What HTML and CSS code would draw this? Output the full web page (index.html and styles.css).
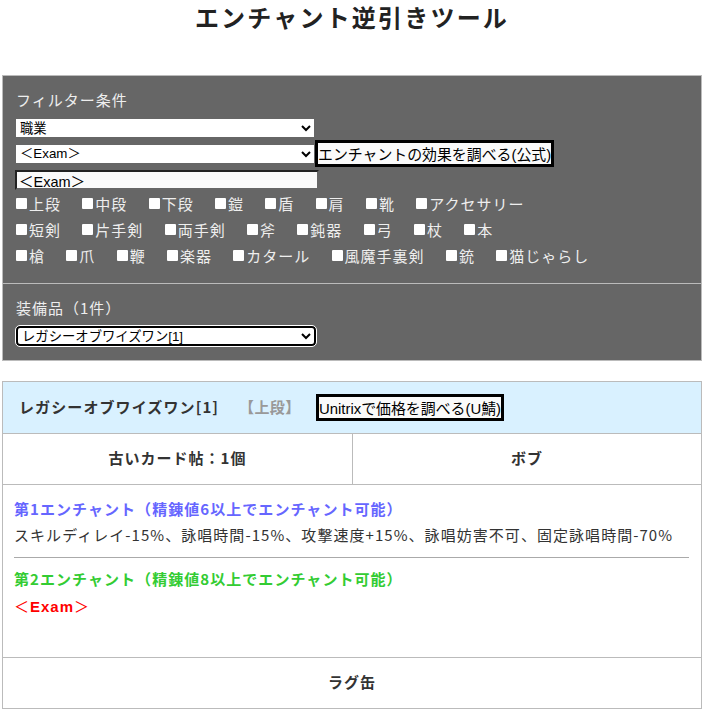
FILE: index.html
```html
<!DOCTYPE html>
<html lang="ja">
<head>
<meta charset="utf-8">
<title>エンチャント逆引きツール</title>
<link rel="stylesheet" href="styles.css">
</head>
<body>
<h1 class="title">エンチャント逆引きツール</h1>
<section class="filter">
  <div class="filter-top">
    <div class="label">フィルター条件</div>
    <div class="row-select row-job"><select class="sel sel-job"><option>職業</option></select></div>
    <div class="row-select row-exam"><select class="sel sel-exam"><option>＜Exam＞</option></select><button class="btn btn-official">エンチャントの効果を調べる(公式)</button></div>
    <input class="text" type="text" value="＜Exam＞">
    <div class="checks">
      <label class="chk"><input type="checkbox">上段</label><label class="chk"><input type="checkbox">中段</label><label class="chk"><input type="checkbox">下段</label><label class="chk"><input type="checkbox">鎧</label><label class="chk"><input type="checkbox">盾</label><label class="chk"><input type="checkbox">肩</label><label class="chk"><input type="checkbox">靴</label><label class="chk"><input type="checkbox">アクセサリー</label>
    </div>
    <div class="checks">
      <label class="chk"><input type="checkbox">短剣</label><label class="chk"><input type="checkbox">片手剣</label><label class="chk"><input type="checkbox">両手剣</label><label class="chk"><input type="checkbox">斧</label><label class="chk"><input type="checkbox">鈍器</label><label class="chk"><input type="checkbox">弓</label><label class="chk"><input type="checkbox">杖</label><label class="chk"><input type="checkbox">本</label>
    </div>
    <div class="checks">
      <label class="chk"><input type="checkbox">槍</label><label class="chk"><input type="checkbox">爪</label><label class="chk"><input type="checkbox">鞭</label><label class="chk"><input type="checkbox">楽器</label><label class="chk"><input type="checkbox">カタール</label><label class="chk"><input type="checkbox">風魔手裏剣</label><label class="chk"><input type="checkbox">銃</label><label class="chk"><input type="checkbox">猫じゃらし</label>
    </div>
  </div>
  <div class="filter-bottom">
    <div class="label">装備品（1件）</div>
    <select class="sel sel-item"><option>レガシーオブワイズワン[1]</option></select>
  </div>
</section>
<section class="card">
  <div class="card-head"><span class="item-name">レガシーオブワイズワン[1]</span><span class="item-slot">【上段】</span><button class="btn btn-price">Unitrixで価格を調べる(U鯖)</button></div>
  <div class="card-cols"><div class="col col-left">古いカード帖：1個</div><div class="col">ボブ</div></div>
  <div class="card-body">
    <div class="ench-title ench-one">第1エンチャント（精錬値6以上でエンチャント可能）</div>
    <div class="ench-text">スキルディレイ-15%、詠唱時間-15%、攻撃速度+15%、詠唱妨害不可、固定詠唱時間-70%</div>
    <hr class="rule">
    <div class="ench-title ench-two">第2エンチャント（精錬値8以上でエンチャント可能）</div>
    <div class="ench-exam"><span class="bracket">＜</span><span class="exam-word">Exam</span><span class="bracket">＞</span></div>
  </div>
  <div class="card-foot">ラグ缶</div>
</section>
</body>
</html>
```
FILE: styles.css
```css
* { box-sizing: border-box; }
html, body { margin: 0; padding: 0; }
body {
  padding: 0 0 0 2px;
  background: #fff;
  color: #333;
  font-family: "Noto Sans CJK JP", sans-serif;
  font-size: 15px;
  letter-spacing: 1px;
  overflow: hidden;
}
.title {
  margin: 0;
  height: 75px;
  text-align: center;
  font-size: 24px;
  line-height: 34px;
  font-weight: 700;
  letter-spacing: 2.2px;
  color: #222;
}
.filter {
  background: #666;
  border: 1px solid #bbb;
  color: #eee;
  height: 286px;
  width: 700px;
}
.filter-top {
  height: 208px;
  padding: 13px 13px 0;
  border-bottom: 1px solid #bbb;
}
.filter-bottom { padding: 13px 13px 0; }
.label { line-height: 22px; height: 22px; }
.row-select { display: flex; align-items: center; }
.sel {
  font-family: "Liberation Sans", "Noto Sans CJK JP", sans-serif;
  letter-spacing: 0;
  color: #000;
  background: #fff;
  border: 0;
  padding: 0;
}
.row-job { margin-top: 8px; }
.sel-job { width: 298px; height: 18px; font-size: 13.33px; }
.row-exam { margin-top: 3px; height: 27px; }
.sel-exam { width: 298px; height: 18px; font-size: 13.33px; }
.btn {
  font-family: "Liberation Sans", "Noto Sans CJK JP", sans-serif;
  letter-spacing: 0;
  font-size: 14.9px;
  color: #000;
  background: #fafafa;
  border: 3px solid #000;
  padding: 0;
  height: 27px;
  white-space: nowrap;
}
.btn-official { margin-left: 1px; }
.text {
  display: block;
  width: 304px;
  height: 20px;
  margin: 3px 0 0 -1px;
  border: 2px solid;
  border-color: #222 #666 #666 #222;
  background: #fafafa;
  font-family: "Liberation Sans", "Noto Sans CJK JP", sans-serif;
  font-size: 14.5px;
  letter-spacing: 0;
  color: #000;
  padding: 0 2px;
}
.checks { display: flex; height: 26px; align-items: center; gap: 21.3px; }
.chk { display: inline-flex; align-items: center; color: #eee; }
.chk input {
  appearance: none;
  width: 11px;
  height: 11px;
  margin: 0 2px 0 0;
  background: #fff;
  border: 0;
  border-radius: 1px;
}
.sel-item {
  display: block;
  width: 300px;
  height: 20px;
  margin-top: 7px;
  font-size: 13.33px;
  border: 2px solid #000;
  border-radius: 4px;
  outline: 1px solid #fff;
}
.card {
  width: 700px;
  margin-top: 20px;
  border: 1px solid #bbb;
}
.card-head {
  display: flex;
  align-items: center;
  height: 52px;
  background: #d9f1ff;
  border-bottom: 1px solid #bbb;
  padding-left: 16px;
  font-weight: 700;
}
.item-name { width: 220px; color: #333; letter-spacing: 1.1px; }
.item-slot { width: 77px; color: #999; letter-spacing: 0.4px; }
.item-name, .item-slot { padding-bottom: 3px; }
.card-cols { display: flex; height: 51px; border-bottom: 1px solid #bbb; font-weight: 700; }
.col { flex: 1; display: flex; align-items: center; justify-content: center; padding-bottom: 3px; }
.col-left { flex: 0 0 350px; border-right: 1px solid #bbb; }
.card-body { height: 173px; padding: 13px 12px 0 11px; border-bottom: 1px solid #bbb; }
.ench-title { font-weight: 700; line-height: 22px; letter-spacing: 1.05px; }
.ench-one { color: #66f; }
.ench-two { color: #3c3; }
.ench-text { line-height: 22px; margin-top: 4px; white-space: nowrap; letter-spacing: 1.05px; }
.rule { border: 0; border-top: 1px solid #aaa; margin: 11px 0 10px; }
.ench-exam { color: #f00; font-weight: 700; line-height: 22px; margin-top: 5px; }
.bracket { font-weight: 400; }
.exam-word { font-family: "Liberation Sans", sans-serif; }
.card-foot { height: 50px; display: flex; align-items: center; justify-content: center; font-weight: 700; padding-bottom: 3px; }
```
